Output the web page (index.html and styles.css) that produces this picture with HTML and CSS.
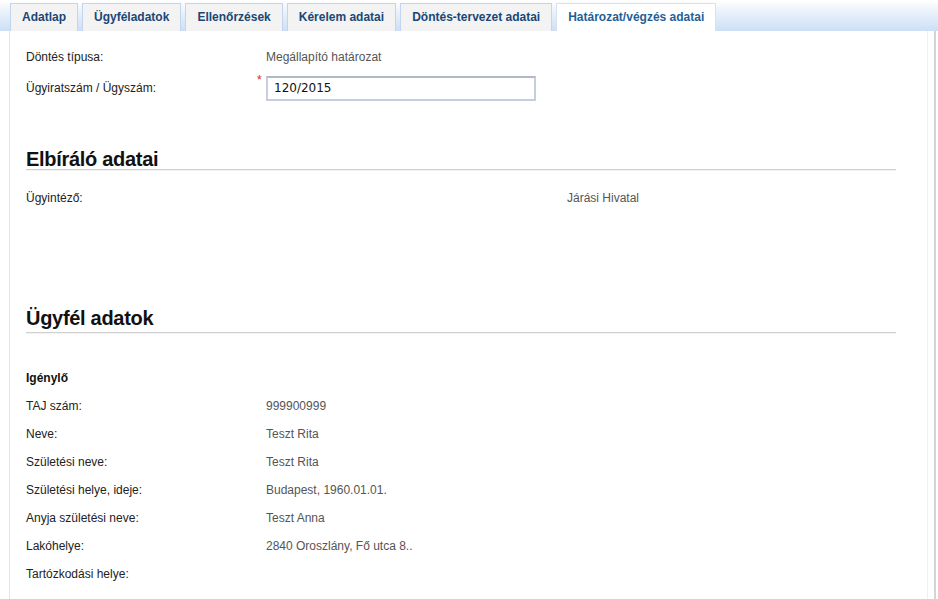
FILE: index.html
```html
<!DOCTYPE html>
<html lang="hu">
<head>
<meta charset="utf-8">
<title>Határozat/végzés adatai</title>
<link rel="stylesheet" href="styles.css">
</head>
<body>
<div class="tabbar">
  <div class="tab">Adatlap</div>
  <div class="tab">Ügyféladatok</div>
  <div class="tab">Ellenőrzések</div>
  <div class="tab">Kérelem adatai</div>
  <div class="tab">Döntés-tervezet adatai</div>
  <div class="tab active">Határozat/végzés adatai</div>
</div>
<div class="frame">
  <div class="content">
    <div class="row">
      <div class="label">Döntés típusa:</div>
      <div class="value">Megállapító határozat</div>
    </div>
    <div class="row row-input">
      <div class="label">Ügyiratszám / Ügyszám:</div>
      <div class="value"><span class="req">*</span><input class="field" type="text" value="120/2015"></div>
    </div>

    <h2 class="section-title first">Elbíráló adatai</h2>
    <div class="row row-three">
      <div class="label">Ügyintéző:</div>
      <div class="value"></div>
      <div class="value">Járási Hivatal</div>
    </div>

    <h2 class="section-title second">Ügyfél adatok</h2>
    <div class="subhead">Igénylő</div>
    <div class="row"><div class="label">TAJ szám:</div><div class="value">999900999</div></div>
    <div class="row"><div class="label">Neve:</div><div class="value">Teszt Rita</div></div>
    <div class="row"><div class="label">Születési neve:</div><div class="value">Teszt Rita</div></div>
    <div class="row"><div class="label">Születési helye, ideje:</div><div class="value">Budapest, 1960.01.01.</div></div>
    <div class="row"><div class="label">Anyja születési neve:</div><div class="value">Teszt Anna</div></div>
    <div class="row"><div class="label">Lakóhelye:</div><div class="value">2840 Oroszlány, Fő utca 8..</div></div>
    <div class="row"><div class="label">Tartózkodási helye:</div><div class="value"></div></div>
  </div>
</div>
</body>
</html>
```
FILE: styles.css
```css
html, body {
  margin: 0;
  padding: 0;
  background: #fff;
}
body {
  font-family: "Liberation Sans", Arial, sans-serif;
  font-size: 12px;
  color: #222;
  width: 938px;
  height: 599px;
  overflow: hidden;
}
.tabbar {
  height: 31px;
  box-sizing: border-box;
  padding-left: 10px;
  display: flex;
  align-items: flex-end;
  gap: 4px;
  background: linear-gradient(to bottom, #ffffff 0%, #e9f1fb 40%, #cddff5 100%);
}
.tab {
  height: 28px;
  box-sizing: border-box;
  padding: 0 11px;
  border: 1px solid #c3d4ec;
  border-bottom: none;
  background: #f3f3f3;
  color: #1a4775;
  font-weight: bold;
  font-size: 12px;
  line-height: 27px;
  white-space: nowrap;
}
.tab.active {
  background: #fff;
  color: #1f5f99;
  border-color: #d6e2f2;
}
.frame {
  margin-left: 9px;
  width: 919px;
  height: 568px;
  box-sizing: border-box;
  border-left: 1px solid #e4e4e4;
  border-right: 1px solid #f0f0f0;
  position: relative;
}
.frame::after {
  content: "";
  position: absolute;
  right: -9px;
  top: 0;
  bottom: 0;
  width: 2px;
  background: #d4d4d4;
}
.content {
  padding: 12px 0 0 16px;
}
.row {
  display: grid;
  grid-template-columns: 240px 1fr;
  height: 28px;
  align-items: center;
}
.row-input {
  height: 34px;
}
.row-three {
  grid-template-columns: 240px 301px 1fr;
}
.label {
  color: #222;
}
.value {
  color: #555;
  position: relative;
}
.req {
  position: absolute;
  left: -9px;
  top: -3px;
  color: #e02020;
  font-size: 12px;
}
.field {
  display: block;
  box-sizing: border-box;
  width: 270px;
  height: 25px;
  margin: 0;
  padding: 2px 6px;
  border: 2px solid #c4cee0;
  border-top-color: #b2b9c4;
  border-left-color: #c8cfda;
  background: #fff;
  font-family: "DejaVu Sans", Verdana, sans-serif;
  font-size: 12px;
  color: #111;
}
.section-title {
  margin: 0;
  border-bottom: 1px solid #d0d0d0;
  box-shadow: 0 1px 0 #f2f2f2;
  width: 870px;
  font-size: 20px;
  font-weight: bold;
  color: #111;
  letter-spacing: -0.3px;
  line-height: 20px;
}
.section-title.first {
  margin-top: 44px;
  padding-bottom: 0;
  margin-bottom: 14px;
}
.section-title.second {
  margin-top: 96px;
  padding-bottom: 4px;
  margin-bottom: 31px;
}
.subhead {
  font-weight: bold;
  color: #111;
  height: 28px;
  line-height: 28px;
}
```
